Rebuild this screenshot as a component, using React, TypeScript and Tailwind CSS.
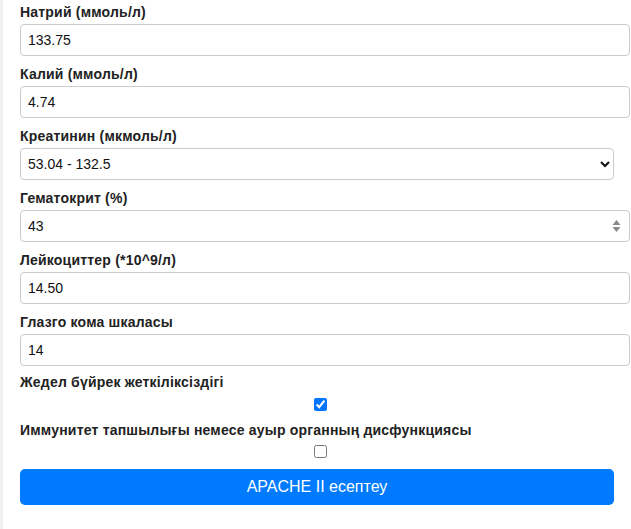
import React from "react";

function Label({ children }: { children: React.ReactNode }) {
  return (
    <label className="block h-4 text-[14px] leading-4 font-bold tracking-[0.2px] text-[#222] mb-1">{children}</label>
  );
}

function TextField({ label, value, spinner }: { label: string; value: string; spinner?: boolean }) {
  return (
    <div className="mb-[10px]">
      <Label>{label}</Label>
      <div className="relative w-[610px]">
        <input
          type="text"
          defaultValue={value}
          className="block w-[610px] h-8 border border-[#ccc] rounded-[4px] bg-white px-[7px] text-[14px] text-[#111] outline-none"
        />
        {spinner && (
          <svg className="absolute right-[9px] top-[9px]" width="9" height="14" viewBox="0 0 9 14">
            <path d="M4.5 1 L8.5 6 L0.5 6 Z" fill="#8a8a8a" />
            <path d="M4.5 13 L8.5 8 L0.5 8 Z" fill="#8a8a8a" />
          </svg>
        )}
      </div>
    </div>
  );
}

export default function App() {
  return (
    <div className="min-h-[529px] bg-[#f0f0f0] pl-[3px] font-['Liberation_Sans',Arial,sans-serif]">
      <div className="min-h-[529px] bg-white pl-[17px] pt-1">
        <TextField label="Натрий (ммоль/л)" value="133.75" />
        <TextField label="Калий (ммоль/л)" value="4.74" />
        <div className="mb-[10px]">
          <Label>Креатинин (мкмоль/л)</Label>
          <select
            defaultValue="53.04 - 132.5"
            className="block w-[594px] h-8 border border-[#ccc] rounded-[4px] bg-white px-[3px] text-[14px] text-[#111] outline-none"
          >
            <option>53.04 - 132.5</option>
          </select>
        </div>
        <TextField label="Гематокрит (%)" value="43" spinner />
        <TextField label="Лейкоциттер (*10^9/л)" value="14.50" />
        <div className="mb-2">
          <Label>Глазго кома шкаласы</Label>
          <input
            type="text"
            defaultValue="14"
            className="block w-[610px] h-8 border border-[#ccc] rounded-[4px] bg-white px-[7px] text-[14px] text-[#111] outline-none"
          />
        </div>
        <div className="w-[594px]">
          <Label>Жедел бүйрек жеткіліксіздігі</Label>
          <div className="flex justify-center pl-[6px] pt-1 h-[28px]">
            <input type="checkbox" defaultChecked className="w-[13px] h-[13px] m-0" />
          </div>
          <Label>Иммунитет тапшылығы немесе ауыр органның дисфункциясы</Label>
          <div className="flex justify-center pl-[6px] pt-[3px] h-[27px]">
            <input type="checkbox" className="w-[13px] h-[13px] m-0" />
          </div>
          <button className="block w-[594px] h-9 rounded-[5px] bg-[#007bff] text-white text-[16px]">
            APACHE II есептеу
          </button>
        </div>
      </div>
    </div>
  );
}
